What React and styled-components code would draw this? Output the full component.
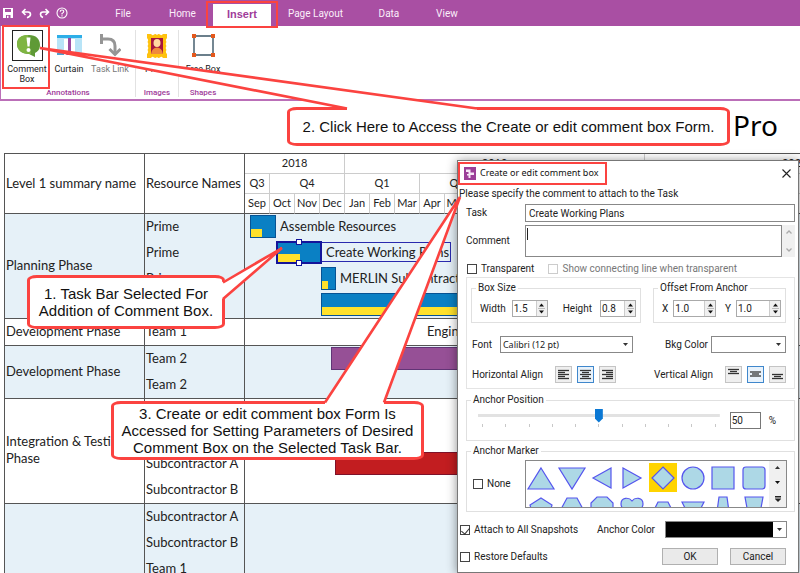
import React, { useState } from "react";
import styled, { createGlobalStyle } from "styled-components";

const GlobalStyle = createGlobalStyle`
  * {
    box-sizing: border-box;
  }
  body {
    margin: 0;
    background-color: #fff;
    font-family: Roboto, "Liberation Sans", sans-serif;
    color: #222;
  }
  button, input, select, textarea {
    font: inherit;
    color: inherit;
  }
`;

const Container = styled.div`
  position: relative;
  height: 100vh;
  overflow: hidden;
`;

/* ---------- ribbon ---------- */

const TopBar = styled.header`
  display: flex;
  align-items: stretch;
  height: 26px;
  background-color: #a94fa3;
  color: #fff;
`;

const QuickAccess = styled.div`
  display: flex;
  align-items: center;
  gap: 4px;
  width: 94px;
  padding-left: 1px;
`;

const QuickButton = styled.button`
  display: flex;
  width: 14px;
  padding: 0;
  border: none;
  background: none;
  justify-content: center;
  cursor: pointer;
`;

const Tabs = styled.nav`
  display: flex;
`;

const Tab = styled.a`
  display: flex;
  align-items: center;
  justify-content: center;
  min-width: 58px;
  margin-top: ${(props) => (props.$active ? "4px" : "0")};
  padding: ${(props) => (props.$active ? "0 14px 2px" : "0 17px")};
  background-color: ${(props) => (props.$active ? "#fff" : "transparent")};
  color: ${(props) => (props.$active ? "#a03c9a" : "#fbeefa")};
  font-family: ${(props) => (props.$active ? '"Liberation Sans", sans-serif' : "inherit")};
  font-size: ${(props) => (props.$active ? "11px" : "10px")};
  font-weight: ${(props) => (props.$active ? "700" : "400")};
  text-decoration: none;
  white-space: nowrap;
`;

const Ribbon = styled.section`
  display: flex;
  height: 75px;
  padding: 4px 0 2px;
  border-bottom: 2px solid #bb6fb8;
  border-left: 1px solid #bb6fb8;
`;

const Group = styled.div`
  display: flex;
  flex-direction: column;
  justify-content: space-between;
  min-width: 43px;
  padding: 0 ${(props) => props.$pad || 0}px;
  border-right: 1px solid ${(props) => (props.$last ? "transparent" : "#e2e2e2")};
`;

const GroupItems = styled.div`
  display: flex;
  justify-content: center;
`;

const GroupLabel = styled.div`
  color: #a03c9a;
  font-size: 8px;
  font-weight: 500;
  line-height: 8px;
  text-align: center;
`;

const Tool = styled.button`
  display: flex;
  flex-direction: column;
  align-items: center;
  width: ${(props) => props.$w}px;
  padding: 0;
  border: none;
  background: none;
  color: ${(props) => (props.$muted ? "#777" : "#222")};
  font-size: 9px;
  line-height: 10px;
  white-space: nowrap;
  cursor: pointer;
`;

const ToolIcon = styled.span`
  display: flex;
  align-items: center;
  justify-content: center;
  width: 31px;
  height: 31px;
  margin-bottom: 3px;
  border: 1px solid ${(props) => (props.$boxed ? "#222" : "transparent")};
`;

/* ---------- schedule ---------- */

const Title = styled.h1`
  margin: 0 0 4px;
  padding-right: 22px;
  font-family: "Noto Sans", sans-serif;
  font-size: 28px;
  font-weight: 400;
  line-height: 48px;
  text-align: right;
  color: #000;
`;

const Sheet = styled.div`
  padding-left: 4px;
  overflow: hidden;
  font-family: Lato, sans-serif;
`;

const Table = styled.table`
  table-layout: fixed;
  width: 941px;
  border-collapse: separate;
  border-spacing: 0;
  border-top: 1px solid #555;
  border-left: 1px solid #555;
`;

const HeadCell = styled.th`
  padding: 0 1px 2px;
  border-right: 1px solid #555;
  border-bottom: 1px solid #555;
  font-size: 13px;
  font-weight: 400;
  text-align: left;
  white-space: nowrap;
`;

const TimeCell = styled.th`
  height: 20px;
  padding: 0 0 2px;
  border-right: 1px solid #ccc;
  border-bottom: 1px solid ${(props) => (props.$last ? "#555" : "#ccc")};
  font-size: 11px;
  font-weight: 400;
`;

const BodyCell = styled.td`
  padding: 0 0 0 ${(props) => (props.$track ? "0" : "1px")};
  border-right: 1px solid #555;
  border-bottom: 1px solid #555;
  background-color: ${(props) => (props.$shade ? "#e6f1f8" : "#fff")};
  font-size: 13px;
  line-height: 17px;
`;

const PhaseName = styled.div`
  padding-bottom: 2px;
`;

const Lane = styled.div`
  display: flex;
  align-items: center;
  height: 26px;
  padding-bottom: 2px;
  padding-left: ${(props) => props.$start || 0}px;
  white-space: nowrap;
`;

const Bar = styled.div`
  position: relative;
  display: flex;
  align-items: flex-end;
  width: ${(props) => props.$w}px;
  height: 23px;
  background-color: ${(props) => props.$color};
  border: ${(props) => (props.$selected ? "2px solid #14149a" : "1px solid rgba(0, 0, 60, 0.35)")};
`;

const Progress = styled.div`
  width: ${(props) => props.$w};
  height: 8px;
  background-color: #ffe12b;
`;

const Handle = styled.span`
  position: absolute;
  left: calc(50% - 3px);
  ${(props) => props.$side}: -4px;
  width: 6px;
  height: 6px;
  border: 1px solid #14149a;
  background-color: #fff;
`;

const TaskName = styled.span`
  height: ${(props) => (props.$selected ? "20px" : "auto")};
  padding: ${(props) => (props.$selected ? "0 1px 0 4px" : "0 4px")};
  border: ${(props) => (props.$selected ? "1px solid #2a2aae" : "none")};
  border-left: none;
  line-height: 18px;
`;

/* ---------- dialog ---------- */

const Dialog = styled.form`
  position: absolute;
  top: 160px;
  right: 1px;
  width: 342px;
  padding: 0 3px 7px 0;
  border: 1px solid #777;
  background-color: #fff;
  box-shadow: 0 1px 10px rgba(0, 0, 0, 0.45);
  font-size: 10px;
  line-height: 12px;
`;

const DialogTitle = styled.div`
  display: flex;
  align-items: center;
  gap: 4px;
  height: 24px;
  padding: 0 4px 0 6px;
  font-family: "Noto Sans", sans-serif;
  font-size: 9px;
  color: #111;
`;

const CloseButton = styled.button`
  display: flex;
  margin-left: auto;
  padding: 0;
  border: none;
  background: none;
  cursor: pointer;
`;

const Note = styled.p`
  margin: 3px 0 4px 1px;
`;

const Field = styled.div`
  display: grid;
  grid-template-columns: 59px 1fr;
  align-items: center;
  margin-bottom: 3px;
  padding-left: 8px;
`;

const TextInput = styled.input`
  width: 100%;
  height: 18px;
  padding: 0 3px;
  border: 1px solid #888;
`;

const CommentWrap = styled.div`
  position: relative;
  display: flex;
  height: 32px;
`;

const TextArea = styled.textarea`
  flex: 1;
  min-width: 0;
  border: 1px solid #888;
  resize: none;
`;

const Caret = styled.span`
  position: absolute;
  left: 2px;
  top: 3px;
  width: 1px;
  height: 12px;
  background-color: #222;
`;

const ScrollStrip = styled.div`
  display: flex;
  flex-direction: column;
  align-items: center;
  justify-content: space-between;
  width: ${(props) => props.$w}px;
  padding: 5px 0;
  background-color: #f0f0f0;
`;

const Line = styled.div`
  display: flex;
  align-items: center;
  min-height: 17px;
  margin-top: ${(props) => props.$top || 0}px;
  padding: 0 ${(props) => props.$right || 0}px 0 ${(props) => props.$left || 0}px;
`;

const Check = styled.label`
  display: flex;
  align-items: center;
  gap: 4px;
  color: ${(props) => (props.$muted ? "#777" : "inherit")};
  white-space: nowrap;
`;

const Tick = styled.input`
  appearance: none;
  width: 10px;
  height: 10px;
  margin: 0;
  border: 1px solid #444;
  background-color: #fff;

  &:disabled {
    border-color: #ccc;
  }
  &:checked::after {
    content: "";
    display: block;
    width: 4px;
    height: 7px;
    margin-left: 2px;
    border: solid #333;
    border-width: 0 1px 1px 0;
    transform: rotate(40deg);
  }
`;

const Panel = styled.div`
  display: flex;
  flex-direction: column;
  gap: 13px;
  margin: 0 0 5px 8px;
  padding: 4px 8px 5px 4px;
  border: 1px solid #e4e4e4;
`;

const Boxes = styled.div`
  display: grid;
  grid-template-columns: 170px 1fr;
  gap: 12px;
`;

const Fieldset = styled.fieldset`
  min-width: 0;
  margin: ${(props) => props.$margin || "0"};
  padding: ${(props) => props.$padding || "0"};
  border: 1px solid #e0e0e0;
`;

const Legend = styled.legend`
  margin-left: 4px;
  padding: 0 2px;
`;

const SpinRow = styled.div`
  display: flex;
  align-items: center;
  justify-content: space-between;
  padding: 0 4px 0 8px;
`;

const SpinLabel = styled.label`
  display: flex;
  align-items: center;
  gap: ${(props) => props.$gap}px;
`;

const SpinBox = styled.span`
  display: flex;
  width: ${(props) => props.$w}px;
  height: 17px;
  border: 1px solid #aaa;
  background-color: #f0f0f0;
`;

const SpinInput = styled.input`
  flex: 1;
  min-width: 0;
  padding: 0 1px;
  border: none;
  background-color: #fff;
`;

const SpinArrows = styled.span`
  display: flex;
  align-items: center;
  justify-content: center;
  width: 11px;
  border-left: 1px solid #ccc;
`;

const SelectWrap = styled.span`
  position: relative;
  display: flex;
  width: ${(props) => props.$w}px;
  margin-left: ${(props) => props.$gap || 0}px;
  height: 17px;
`;

const Select = styled.select`
  appearance: none;
  width: 100%;
  padding: 0 2px;
  border: 1px solid #888;
  border-radius: 0;
  background-color: ${(props) => props.$color || "#fff"};
  font-family: "Noto Sans", sans-serif;
  font-size: 9px;
  line-height: 13px;
`;

const SelectArrow = styled.span`
  position: absolute;
  top: 1px;
  right: 1px;
  bottom: 1px;
  display: flex;
  align-items: center;
  justify-content: center;
  width: 13px;
  background-color: #fff;
  pointer-events: none;
`;

const RightSide = styled.div`
  display: flex;
  align-items: center;
  margin-left: auto;
`;

const AlignGroup = styled.div`
  display: flex;
  gap: 5px;
  margin-left: ${(props) => props.$gap}px;
`;

const AlignButton = styled.button`
  display: flex;
  align-items: center;
  justify-content: center;
  width: 17px;
  height: 17px;
  padding: 0;
  border: 1px solid ${(props) => (props.$on ? "#3f87cc" : "#c4c4c4")};
  background-color: ${(props) => (props.$on ? "#e8f2fb" : "#efefef")};
`;

const SliderRow = styled.div`
  display: flex;
  align-items: center;
  padding: 0 18px 0 11px;
`;

const SliderBox = styled.div`
  flex: 1;
  margin-right: 10px;
`;

const Range = styled.input`
  appearance: none;
  display: block;
  width: 100%;
  height: 14px;
  margin: 0;
  background: linear-gradient(#e2e2e2, #e2e2e2) center 5px / 100% 3px no-repeat;

  &::-webkit-slider-thumb {
    appearance: none;
    width: 8px;
    height: 14px;
    background-color: #0b78d4;
    clip-path: polygon(0 0, 100% 0, 100% 72%, 50% 100%, 0 72%);
  }
`;

const Ticks = styled.div`
  display: flex;
  justify-content: space-between;
  padding: 1px 4px 0;

  i {
    width: 1px;
    height: 3px;
    background-color: #c8c8c8;
  }
`;

const PercentInput = styled.input`
  width: 31px;
  height: 17px;
  margin-top: 6px;
  padding: 0 1px;
  border: 1px solid #777;
`;

const MarkerRow = styled.div`
  display: grid;
  grid-template-columns: 58px 1fr;
  align-items: center;
`;

const Gallery = styled.div`
  display: flex;
  height: 48px;
  border: 1px solid #888;
`;

const MarkerGrid = styled.div`
  flex: 1;
  display: grid;
  grid-template-columns: repeat(8, 1fr);
  grid-auto-rows: 30px;
  overflow: hidden;
`;

const MarkerButton = styled.button`
  display: flex;
  align-items: center;
  justify-content: center;
  height: 29px;
  margin: 2px 1px 0;
  padding: 0;
  border: none;
  background-color: ${(props) => (props.$on ? "#ffd400" : "transparent")};
`;

const PushButton = styled.button`
  width: 56px;
  height: 17px;
  margin-left: 12px;
  padding: 0;
  border: 1px solid #b0b0b0;
  background-color: #eaeaea;
`;

/* ---------- callouts ---------- */

const Callout = styled.div`
  position: absolute;
  left: ${(props) => props.$x}px;
  top: ${(props) => props.$y}px;
  width: ${(props) => props.$w}px;
  padding: ${(props) => props.$pad};
  border: 3px solid #fb4340;
  border-radius: 10px / 5px;
  background-color: #fff;
  color: #111;
  font-family: "Liberation Sans", Arial, sans-serif;
  font-size: 15px;
  line-height: 17px;
  text-align: center;
  white-space: nowrap;
`;

const Tails = styled.svg`
  position: absolute;
  left: 0;
  top: 0;
  pointer-events: none;
`;

const Highlight = styled.div`
  position: absolute;
  left: ${(props) => props.$x}px;
  top: ${(props) => props.$y}px;
  width: ${(props) => props.$w}px;
  height: ${(props) => props.$h}px;
  border: 2px solid #fb4340;
  pointer-events: none;
`;

const tabs = ["File", "Home", "Insert", "Page Layout", "Data", "View"];

const months = ["Sep", "Oct", "Nov", "Dec", "Jan", "Feb", "Mar", "Apr", "May", "Jun", "Jul", "Aug"];

const BLUE = "#0a80c4";

const groups = [
  {
    name: "Planning Phase",
    rows: [
      { who: "Prime", start: 5, width: 26, color: BLUE, done: "11px", task: "Assemble Resources" },
      { who: "Prime", start: 31, width: 46, color: BLUE, done: "22px", task: "Create Working Plans", selected: true },
      { who: "Prime", start: 76, width: 15, color: BLUE, done: "6px", task: "MERLIN Subcontractor" },
      { who: "", start: 76, width: 400, color: BLUE, done: "100%" },
    ],
  },
  { name: "Development Phase", rows: [{ who: "Team 1", start: 182, label: "Engineering" }] },
  {
    name: "Development Phase",
    rows: [{ who: "Team 2", start: 86, width: 400, color: "#965096" }, { who: "Team 2" }],
  },
  {
    name: "Integration & Testing Phase",
    rows: [
      { who: "" },
      { who: "" },
      { who: "Subcontractor A", start: 90, width: 400, color: "#c21d20" },
      { who: "Subcontractor B" },
    ],
  },
  { name: "", rows: [{ who: "Subcontractor A" }, { who: "Subcontractor B" }, { who: "Team 1" }, { who: "" }] },
];

const markers = [
  "M13 2 L26 23 L0 23Z",
  "M0 2 L26 2 L13 23Z",
  "M22 2 L22 22 L4 12Z",
  "M4 2 L22 12 L4 22Z",
  "M13 1 L24 12 L13 23 L2 12Z",
  "M2 12 a11 11 0 1 0 22 0 a11 11 0 1 0 -22 0Z",
  "M2 1 H24 V23 H2Z",
  "M5 1 H21 Q24 1 24 4 V20 Q24 23 21 23 H5 Q2 23 2 20 V4 Q2 1 5 1Z",
  "M13 2 L24 9 L20 23 H6 L2 9Z",
  "M8 2 H18 L25 15 L18 23 H8 L1 15Z",
  "M8 1 H18 L24 7 V17 L18 23 H8 L2 17 V7Z",
  "M13 5 C10 1 2 1 2 8 C2 14 10 19 13 23 C16 19 24 14 24 8 C24 1 16 1 13 5Z",
  "M8 6 H18 L24 18 H2Z",
  "M2 6 H24 L18 18 H8Z",
  "M9 1 H17 L20 23 H6Z",
  "M4 1 H22 L18 23 H8Z",
];

function Arrow({ up, color = "#333", size = 5 }) {
  return (
    <svg width={size} height="3" viewBox="0 0 5 3">
      <path d={up ? "M0 3 L2.5 0 L5 3Z" : "M0 0 L2.5 3 L5 0Z"} fill={color} />
    </svg>
  );
}

function Spinner({ id, label, value, width, gap }) {
  return (
    <SpinLabel htmlFor={id} $gap={gap}>
      {label}
      <SpinBox $w={width}>
        <SpinInput id={id} type="text" defaultValue={value} />
        <SpinArrows>
          <svg width="7" height="13" viewBox="0 0 7 13">
            <path d="M1 4.5 L3.5 1.5 L6 4.5Z M1 8.5 L3.5 11.5 L6 8.5Z" fill="#111" />
            <path d="M0 6.5 H7" stroke="#bbb" />
          </svg>
        </SpinArrows>
      </SpinBox>
    </SpinLabel>
  );
}

function AlignIcon({ rows, side }) {
  return (
    <svg width="13" height="13" viewBox="0 0 13 13" stroke="#333" strokeWidth="1.3">
      {rows.map((y, i) => {
        const w = i % 2 ? 7 : 11;
        const x = side === "left" ? 1 : side === "right" ? 12 - w : (13 - w) / 2;
        return <path key={y} d={`M${x} ${y} h${w}`} />;
      })}
    </svg>
  );
}

function Header() {
  return (
    <TopBar>
      <QuickAccess>
        <QuickButton aria-label="Save">
          <svg width="10" height="10" viewBox="0 0 10 10">
            <path d="M0 0 H10 V10 H0Z M2 1 V4 H8 V1Z M3 7 V10 H4 V7.800 H5.500 V10 H7.500 V7Z" fill="#fff" fillRule="evenodd" />
          </svg>
        </QuickButton>
        <QuickButton aria-label="Undo">
          <svg width="11" height="11" viewBox="0 0 11 11" fill="none" stroke="#fff" strokeWidth="1.6">
            <path d="M4.5 1 L1.5 4 L4.5 7 M2 4 H7 Q9.5 4 9.5 6.5 Q9.5 8.5 6 9.8" />
          </svg>
        </QuickButton>
        <QuickButton aria-label="Redo">
          <svg width="11" height="11" viewBox="0 0 11 11" fill="none" stroke="#fff" strokeWidth="1.6">
            <path d="M6.5 1 L9.5 4 L6.5 7 M9 4 H4 Q1.5 4 1.5 6.5 Q1.5 8.5 4 9.5" />
          </svg>
        </QuickButton>
        <QuickButton aria-label="Help">
          <svg width="12" height="12" viewBox="0 0 12 12" fill="none" stroke="#fff" strokeWidth="1.1">
            <circle cx="6" cy="6" r="5" />
            <path d="M4.2 4.8 Q4.2 3 6 3 Q7.8 3 7.8 4.6 Q7.8 5.6 6 6.4 V7.4 M6 8.3 V9.4" />
          </svg>
        </QuickButton>
      </QuickAccess>
      <Tabs>
        {tabs.map((tab) => (
          <Tab key={tab} href="#" $active={tab === "Insert"}>
            {tab}
          </Tab>
        ))}
      </Tabs>
    </TopBar>
  );
}

function Tools() {
  return (
    <Ribbon>
      <Group $pad={4}>
        <GroupItems>
          <Tool $w={44}>
            <ToolIcon $boxed>
              <svg width="27" height="27" viewBox="0 0 27 27">
                <path d="M15 3 C22 3 26 7 26 13 C26 18 23 20 21 21 L21 25 L15 22 C7 22 3 17 3 12 C3 6 8 3 15 3Z" fill="#5f9a36" />
                <path d="M3 12 C3 5 8 3 14 3 L17 22 C7 22 3 18 3 12Z" fill="#7fb542" />
                <path d="M12.5 5.5 H16.5 L15.5 14.5 H13.5Z" fill="#fff" />
                <circle cx="14.5" cy="18" r="2" fill="#fff" />
              </svg>
            </ToolIcon>
            <span>Comment</span>
            <span>Box</span>
          </Tool>
          <Tool $w={40}>
            <ToolIcon>
              <svg width="25" height="21" viewBox="0 0 25 21">
                <path d="M0 0 H25 V18 H18 V4 H7 V18 H0Z" fill="#b8e4f7" />
                <path d="M0 0 H25 V3 H0Z" fill="#2daee8" />
                <path d="M0 18 H7 V20 H0Z M18 18 H25 V20 H18Z" fill="#4f9fd0" />
                <path d="M11 3 H14 V17 L16 20 H9 L11 17Z" fill="#9a4aa0" />
              </svg>
            </ToolIcon>
            <span>Curtain</span>
          </Tool>
          <Tool $w={42} $muted>
            <ToolIcon>
              <svg width="21" height="23" viewBox="0 0 21 23" fill="none" stroke="#959595" strokeWidth="3">
                <path d="M1.5 0 V10 M1.5 5 H8 Q15 5 15 12 V19" />
                <path d="M9.5 15 L15 20.5 L20.5 15" />
              </svg>
            </ToolIcon>
            <span>Task Link</span>
          </Tool>
        </GroupItems>
        <GroupLabel>Annotations</GroupLabel>
      </Group>
      <Group>
        <GroupItems>
          <Tool $w={40}>
            <ToolIcon>
              <svg width="20" height="24" viewBox="0 0 20 24">
                <path
                  d="M0 0 H4 Q5.500 2 7 0.500 Q8.500 -0.500 10 1 Q11.500 -0.500 13 0.500 Q14.500 2 16 0 H20 V4 Q18 6 19.500 8 Q18 10 19.500 12 Q18 14 19.500 16 Q18 18 20 20 V24 H16 Q14.500 22 13 23.500 Q11.500 24.500 10 23 Q8.500 24.500 7 23.500 Q5.500 22 4 24 H0 V20 Q2 18 0.500 16 Q2 14 0.500 12 Q2 10 0.500 8 Q2 6 0 4Z"
                  fill="#ffc20e"
                />
                <path d="M4 4 H16 V20 H4Z" fill="#a5173f" />
                <ellipse cx="10" cy="9" rx="3.5" ry="4" fill="#ffd9a0" />
                <path d="M4 20 Q5 13.5 10 13.5 Q15 13.5 16 20Z" fill="#f08a3c" />
              </svg>
            </ToolIcon>
            <span>Photo</span>
          </Tool>
        </GroupItems>
        <GroupLabel>Images</GroupLabel>
      </Group>
      <Group $last>
        <GroupItems>
          <Tool $w={48}>
            <ToolIcon>
              <svg width="23" height="23" viewBox="0 0 23 23">
                <path d="M2 2 H21 V21 H2Z" fill="#fff" stroke="#3b5565" strokeWidth="1.4" />
                <path d="M0 0 H4 V4 H0Z M19 0 H23 V4 H19Z M0 19 H4 V23 H0Z M19 19 H23 V23 H19Z" fill="#e4581c" />
              </svg>
            </ToolIcon>
            <span>Free Box</span>
          </Tool>
        </GroupItems>
        <GroupLabel>Shapes</GroupLabel>
      </Group>
    </Ribbon>
  );
}

function Schedule() {
  return (
    <Sheet>
      <Table>
        <colgroup>
          <col width="140" />
          <col width="100" />
          {Array.from({ length: 28 }, (_, i) => (
            <col key={i} width="25" />
          ))}
        </colgroup>
        <thead>
          <tr>
            <HeadCell rowSpan={3}>Level 1 summary name</HeadCell>
            <HeadCell rowSpan={3}>Resource Names</HeadCell>
            <TimeCell colSpan={4}>2018</TimeCell>
            <TimeCell colSpan={12}>2019</TimeCell>
            <TimeCell colSpan={12}>2020</TimeCell>
          </tr>
          <tr>
            <TimeCell>Q3</TimeCell>
            {["Q4", "Q1", "Q2", "Q3", "Q4", "Q1", "Q2", "Q3", "Q4"].map((q, i) => (
              <TimeCell key={i} colSpan={3}>{q}</TimeCell>
            ))}
          </tr>
          <tr>
            {Array.from({ length: 28 }, (_, i) => (
              <TimeCell key={i} $last>{months[i % 12]}</TimeCell>
            ))}
          </tr>
        </thead>
        <tbody>
          {groups.map((group, i) => (
            <tr key={i}>
              <BodyCell $shade={i % 2 === 0}>
                <PhaseName>{group.name}</PhaseName>
              </BodyCell>
              <BodyCell $shade={i % 2 === 0}>
                {group.rows.map((row, j) => (
                  <Lane key={j}>{row.who}</Lane>
                ))}
              </BodyCell>
              <BodyCell $track $shade={i % 2 === 0} colSpan={28}>
                {group.rows.map((row, j) => (
                  <Lane key={j} $start={row.start}>
                    {row.width && (
                      <Bar $w={row.width} $color={row.color} $selected={row.selected}>
                        {row.done && <Progress $w={row.done} />}
                        {row.selected && <Handle $side="top" />}
                        {row.selected && <Handle $side="bottom" />}
                      </Bar>
                    )}
                    {row.task && <TaskName $selected={row.selected}>{row.task}</TaskName>}
                    {row.label}
                  </Lane>
                ))}
              </BodyCell>
            </tr>
          ))}
        </tbody>
      </Table>
    </Sheet>
  );
}

function CommentDialog() {
  const [marker, setMarker] = useState(4);
  const [position, setPosition] = useState(50);
  const [hAlign, setHAlign] = useState(1);
  const [vAlign, setVAlign] = useState(1);

  return (
    <Dialog onSubmit={(e) => e.preventDefault()}>
      <DialogTitle>
        <svg width="12" height="13" viewBox="0 0 12 13">
          <path d="M0 0 H12 V13 H0Z" fill="#9b3f98" />
          <path d="M2 2.5 H6.5 V5.5 H10 V8 H6.5 V11 H4.5 V8.5 H3 V7 H4.5 V5 H2Z" fill="#f6e6f6" />
        </svg>
        Create or edit comment box
        <CloseButton type="button" aria-label="Close">
          <svg width="9" height="9" viewBox="0 0 9 9" stroke="#222" strokeWidth="1.1">
            <path d="M0.5 0.5 L8.5 8.5 M8.5 0.5 L0.5 8.5" />
          </svg>
        </CloseButton>
      </DialogTitle>
      <Note>Please specify the comment to attach to the Task</Note>
      <Field>
        <label htmlFor="task">Task</label>
        <TextInput id="task" type="text" defaultValue="Create Working Plans" />
      </Field>
      <Field>
        <label htmlFor="comment">Comment</label>
        <CommentWrap>
          <TextArea id="comment" />
          <Caret />
          <ScrollStrip $w={13}>
            <svg width="6" height="4" viewBox="0 0 6 4" fill="none" stroke="#aaa" strokeWidth="1.3">
              <path d="M0.5 3.5 L3 1 L5.5 3.5" />
            </svg>
            <svg width="6" height="4" viewBox="0 0 6 4" fill="none" stroke="#aaa" strokeWidth="1.3">
              <path d="M0.5 0.5 L3 3 L5.5 0.5" />
            </svg>
          </ScrollStrip>
        </CommentWrap>
      </Field>
      <Line $left={9} $right={58}>
        <Check>
          <Tick type="checkbox" />
          Transparent
        </Check>
        <RightSide>
          <Check $muted>
            <Tick type="checkbox" disabled />
            Show connecting line when transparent
          </Check>
        </RightSide>
      </Line>
      <Panel>
        <Boxes>
          <Fieldset $padding="6px 0 5px">
            <Legend>Box Size</Legend>
            <SpinRow>
              <Spinner id="width" label="Width" value="1.5" width={36} gap={6} />
              <Spinner id="height" label="Height" value="0.8" width={36} gap={8} />
            </SpinRow>
          </Fieldset>
          <Fieldset $padding="6px 0 5px">
            <Legend>Offset From Anchor</Legend>
            <SpinRow>
              <Spinner id="x" label="X" value="1.0" width={43} gap={5} />
              <Spinner id="y" label="Y" value="1.0" width={45} gap={5} />
            </SpinRow>
          </Fieldset>
        </Boxes>
        <Line $left={1}>
          <label htmlFor="font">Font</label>
          <SelectWrap $w={133} $gap={8}>
            <Select id="font">
              <option>Calibri (12 pt)</option>
            </Select>
            <SelectArrow>
              <Arrow />
            </SelectArrow>
          </SelectWrap>
          <RightSide>
            <label htmlFor="bkg">Bkg Color</label>
            <SelectWrap $w={75} $gap={3}>
              <Select id="bkg" />
              <SelectArrow>
                <Arrow />
              </SelectArrow>
            </SelectWrap>
          </RightSide>
        </Line>
        <Line $left={1}>
          Horizontal Align
          <AlignGroup $gap={12}>
            {["left", "center", "right"].map((side, i) => (
              <AlignButton key={side} type="button" aria-label={side} $on={hAlign === i} onClick={() => setHAlign(i)}>
                <AlignIcon side={side} rows={[2.5, 4.5, 6.5, 8.5, 10.5]} />
              </AlignButton>
            ))}
          </AlignGroup>
          <RightSide>
            Vertical Align
            <AlignGroup $gap={12}>
              {["top", "middle", "bottom"].map((side, i) => (
                <AlignButton key={side} type="button" aria-label={side} $on={vAlign === i} onClick={() => setVAlign(i)}>
                  <AlignIcon side="center" rows={[1.5 + i * 2.5, 3.5 + i * 2.5, 5.5 + i * 2.5]} />
                </AlignButton>
              ))}
            </AlignGroup>
          </RightSide>
        </Line>
      </Panel>
      <Fieldset $margin="0 0 4px 8px" $padding="0 0 11px">
        <Legend>Anchor Position</Legend>
        <SliderRow>
          <SliderBox>
            <Range
              type="range"
              aria-label="Anchor Position"
              value={position}
              onChange={(e) => setPosition(e.target.value)}
            />
            <Ticks>
              {Array.from({ length: 11 }, (_, i) => (
                <i key={i} />
              ))}
            </Ticks>
          </SliderBox>
          <PercentInput
            id="percent"
            type="text"
            aria-label="Percent"
            value={position}
            onChange={(e) => setPosition(e.target.value)}
          />
          <Line $left={8} $top={6}>
            <label htmlFor="percent">%</label>
          </Line>
        </SliderRow>
      </Fieldset>
      <Fieldset $margin="0 0 9px 8px" $padding="3px 7px 3px 0">
        <Legend>Anchor Marker</Legend>
        <MarkerRow>
          <Line $left={6}>
            <Check>
              <Tick type="checkbox" />
              None
            </Check>
          </Line>
          <Gallery>
            <MarkerGrid>
              {markers.map((d, i) => (
                <MarkerButton
                  key={i}
                  type="button"
                  aria-label={`Marker ${i + 1}`}
                  $on={marker === i}
                  onClick={() => setMarker(i)}
                >
                  <svg width="26" height="24" viewBox="0 0 26 24" overflow="visible">
                    <path d={d} fill="#add8e6" stroke="#5555ee" strokeWidth="1.2" />
                  </svg>
                </MarkerButton>
              ))}
            </MarkerGrid>
            <ScrollStrip $w={17}>
              <Arrow up />
              <Arrow color="#111" />
              <svg width="6" height="6" viewBox="0 0 6 6">
                <path d="M0 0.5 H6 M0 2 H6" stroke="#222" />
                <path d="M0 3 L3 6 L6 3Z" fill="#222" />
              </svg>
            </ScrollStrip>
          </Gallery>
        </MarkerRow>
      </Fieldset>
      <Line $left={2} $right={8}>
        <Check>
          <Tick type="checkbox" defaultChecked />
          Attach to All Snapshots
        </Check>
        <RightSide>
          <label htmlFor="anchorColor">Anchor Color</label>
          <SelectWrap $w={122} $gap={10}>
            <Select id="anchorColor" $color="#000" />
            <SelectArrow>
              <Arrow />
            </SelectArrow>
          </SelectWrap>
        </RightSide>
      </Line>
      <Line $left={2} $right={9} $top={10}>
        <Check>
          <Tick type="checkbox" />
          Restore Defaults
        </Check>
        <RightSide>
          <PushButton type="submit">OK</PushButton>
          <PushButton type="button">Cancel</PushButton>
        </RightSide>
      </Line>
    </Dialog>
  );
}

function App() {
  return (
    <Container>
      <GlobalStyle />
      <Header />
      <Tools />
      <Title>Pro</Title>
      <Schedule />
      <CommentDialog />

      <Highlight $x={206} $y={1} $w={72} $h={27} />
      <Highlight $x={2} $y={25} $w={48} $h={64} />
      <Highlight $x={458} $y={162} $w={149} $h={23} />

      <Callout $x={287} $y={107} $w={443} $pad="8px 0">
        2. Click Here to Access the Create or edit comment box Form.
      </Callout>
      <Callout $x={27} $y={275} $w={198} $pad="7px 0">
        1. Task Bar Selected For
        <br />
        Addition of Comment Box.
      </Callout>
      <Callout $x={111} $y={401} $w={313} $pad="1px 0">
        3. Create or edit comment box Form Is
        <br />
        Accessed for Setting Parameters of Desired
        <br />
        Comment Box on the Selected Task Bar.
      </Callout>
      <Tails width="800" height="573" viewBox="0 0 800 573">
        <g fill="#fff">
          <path d="M347 108 L40 48 L477 108 V111 H347Z" />
          <path d="M222 282 L282 248 L222 299 H221 V282Z" />
          <path d="M325 402 L460 197 L384 402 V405 H325Z" />
        </g>
        <g fill="none" stroke="#fb4340" strokeWidth="2.6">
          <path d="M347 108.5 L40 48 L477 108.5" />
          <path d="M223 282.5 L282 248 L223 299" />
          <path d="M325 402.5 L460 197 L384 402.5" />
        </g>
      </Tails>
    </Container>
  );
}

export default App;
